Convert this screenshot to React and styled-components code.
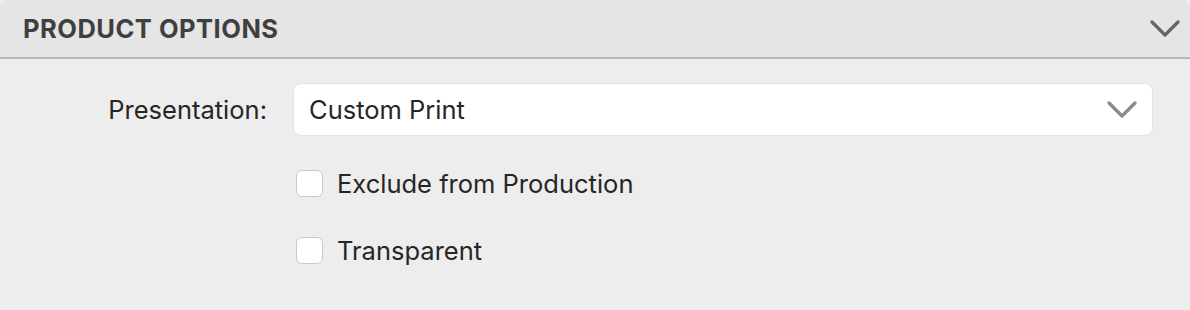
import React from "react";
import styled, { createGlobalStyle } from "styled-components";

const Global = createGlobalStyle`
  html, body { margin: 0; padding: 0; background: #ededed; }
  body { font-family: Inter, "Noto Sans", "Liberation Sans", sans-serif; -webkit-font-smoothing: antialiased; }
`;

const Panel = styled.section`
  width: 1190px;
  height: 310px;
  background: #ededed;
  box-sizing: border-box;
  overflow: hidden;
`;

const Header = styled.header`
  height: 59px;
  box-sizing: border-box;
  background: #e5e5e5;
  border-bottom: 2px solid #b8b8b8;
  border-radius: 8px 8px 0 0;
  display: flex;
  align-items: center;
  justify-content: space-between;
  padding: 0 10px 0 23px;
`;

const Title = styled.h2`
  margin: 0;
  font-size: 25.5px;
  font-weight: 700;
  color: #3f3f3f;
  letter-spacing: 0.5px;
`;

const Chevron = ({ color = "#666", width = 30, height = 17, stroke = 3.2 }) => (
  <svg width={width} height={height} viewBox="0 0 30 17" fill="none">
    <path d="M2 2 L15 15 L28 2" stroke={color} strokeWidth={stroke} strokeLinecap="round" strokeLinejoin="round" />
  </svg>
);

const Body = styled.div`
  display: grid;
  grid-template-columns: 267px 860px;
  column-gap: 26px;
  row-gap: 27px;
  padding-top: 24px;
  align-items: center;
`;

const Label = styled.label`
  text-align: right;
  font-size: 25.5px;
  color: #262626;
`;

const Select = styled.div`
  height: 53px;
  box-sizing: border-box;
  background: #fff;
  border: 1px solid #e2e2e2;
  border-radius: 8px;
  display: flex;
  align-items: center;
  justify-content: space-between;
  padding: 0 15px 0 15px;
  font-size: 25.5px;
  color: #262626;
`;

const CheckRow = styled.label`
  grid-column: 2;
  display: flex;
  align-items: center;
  gap: 14px;
  height: 40px;
  font-size: 25.5px;
  color: #262626;
  padding-left: 3px;
`;

const Box = styled.span`
  width: 27px;
  height: 27px;
  box-sizing: border-box;
  background: #fff;
  border: 1px solid #c9c9c9;
  border-radius: 6px;
  flex: none;
`;

export default function App() {
  return (
    <>
      <Global />
      <Panel>
        <Header>
          <Title>PRODUCT OPTIONS</Title>
          <Chevron color="#666" />
        </Header>
        <Body>
          <Label>Presentation:</Label>
          <Select>
            <span>Custom Print</span>
            <Chevron color="#8a8a8a" />
          </Select>
          <CheckRow>
            <Box />
            Exclude from Production
          </CheckRow>
          <CheckRow>
            <Box />
            Transparent
          </CheckRow>
        </Body>
      </Panel>
    </>
  );
}
